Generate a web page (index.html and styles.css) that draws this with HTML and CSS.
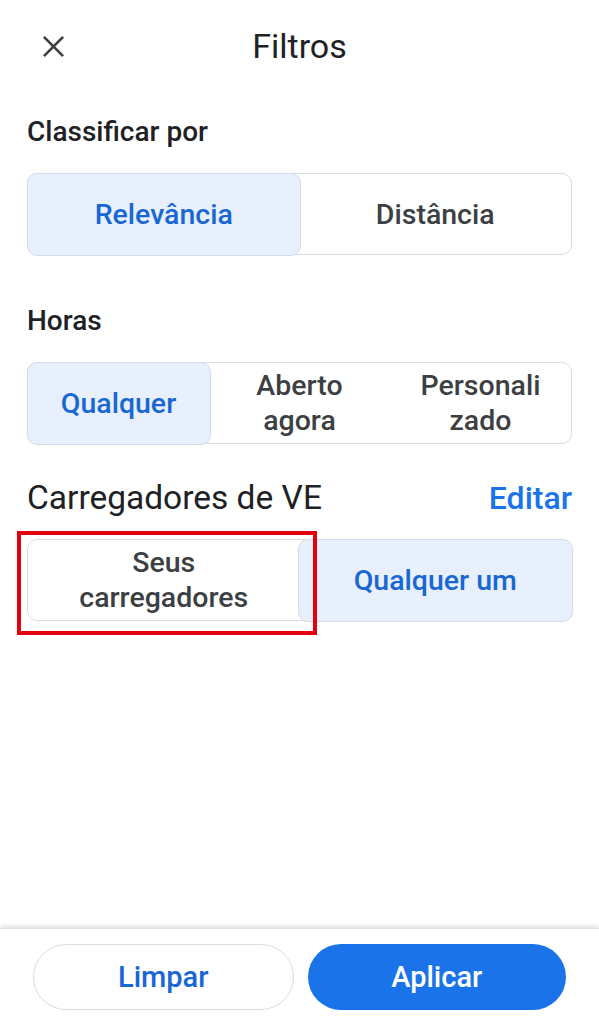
FILE: index.html
```html
<!DOCTYPE html>
<html lang="pt">
<head>
    <meta charset="UTF-8">
    <meta name="viewport" content="width=device-width, initial-scale=1.0">
    <title>Filtros</title>
    <link rel="stylesheet" href="styles.css">
</head>
<body>
    <div class="page">
        <header class="top">
            <button class="close" aria-label="Fechar">
                <svg width="24" height="24" viewBox="0 0 24 24"><path d="M2 2 L22 22 M22 2 L2 22" stroke="#3c4043" stroke-width="2.8" fill="none"/></svg>
            </button>
            <h1 class="title">Filtros</h1>
            <span></span>
        </header>

        <main class="content">
            <h2 class="label">Classificar por</h2>
            <div class="seg">
                <div class="opt on">Relevância</div>
                <div class="opt">Distância</div>
            </div>

            <h2 class="label label-hours">Horas</h2>
            <div class="seg three">
                <div class="opt on">Qualquer</div>
                <div class="opt">Aberto<br>agora</div>
                <div class="opt">Personali<br>zado</div>
            </div>

            <div class="row-head">
                <h2 class="label big">Carregadores de VE</h2>
                <a class="edit" href="#">Editar</a>
            </div>
            <div class="seg-wrap">
                <div class="seg">
                    <div class="opt">Seus<br>carregadores</div>
                    <div class="opt on">Qualquer um</div>
                </div>
                <div class="mark"></div>
            </div>
        </main>

        <footer class="bottom">
            <button class="btn ghost">Limpar</button>
            <button class="btn primary">Aplicar</button>
        </footer>
    </div>
</body>
</html>
```

FILE: styles.css
```css
* { box-sizing: border-box; }
body {
    margin: 0;
    font-family: Roboto, "Noto Sans", Arial, sans-serif;
    background: #fff;
    color: #202124;
}
.page {
    height: 100vh;
    display: flex;
    flex-direction: column;
}
.top {
    display: grid;
    grid-template-columns: 1fr auto 1fr;
    align-items: center;
    height: 92px;
    padding: 0 27px;
}
.close {
    width: 52px;
    height: 52px;
    padding: 0;
    border: 0;
    background: none;
    display: flex;
    align-items: center;
    justify-content: center;
    justify-self: start;
}
.close svg { width: 23px; height: 23px; }
.title {
    margin: 0;
    font-size: 34px;
    font-weight: 400;
    color: #202124;
}
.content {
    flex: 1;
    padding: 0 27px;
}
.label {
    margin: 24px 0 0;
    height: 32px;
    line-height: 32px;
    font-size: 28px;
    font-weight: 500;
    color: #202124;
}
.label-hours { margin-top: 50px; }
.seg {
    margin-top: 25px;
    height: 82px;
    display: grid;
    grid-template-columns: 1fr 1fr;
    border: 1.5px solid #dadce0;
    border-radius: 10px;
}
.seg.three { grid-template-columns: 1fr 1fr 1fr; }
.opt {
    display: flex;
    align-items: center;
    justify-content: center;
    text-align: center;
    margin: -1.5px;
    font-size: 28.5px;
    font-weight: 500;
    line-height: 35px;
    color: #3c4043;
}
.opt.on {
    background: #e8f0fe;
    border: 1.5px solid #d3dcea;
    border-radius: 10px;
    color: #1967d2;
}
.row-head {
    margin-top: 35px;
    height: 38px;
    display: flex;
    justify-content: space-between;
    align-items: center;
}
.label.big {
    margin: 0;
    font-size: 33.5px;
    font-weight: 400;
    height: 38px;
    line-height: 38px;
}
.edit {
    font-size: 32px;
    line-height: 38px;
    font-weight: 500;
    color: #1a73e8;
    text-decoration: none;
}
.seg-wrap {
    position: relative;
    margin-top: 22px;
}
.seg-wrap .seg { margin-top: 0; }
.mark {
    position: absolute;
    left: -10px;
    top: -8px;
    width: 300px;
    height: 104px;
    border: 4px solid #e5000f;
}
.bottom {
    display: flex;
    gap: 14px;
    padding: 15px 33px 14px;
    border-top: 1px solid #e2e2e2;
    box-shadow: 0 -2px 4px rgba(0, 0, 0, 0.12);
}
.btn {
    flex: 1;
    height: 66px;
    border-radius: 33px;
    font-family: inherit;
    font-size: 29px;
    font-weight: 500;
}
.ghost {
    background: #fff;
    border: 1.5px solid #dadce0;
    color: #1967d2;
}
.primary {
    background: #1a73e8;
    border: 0;
    color: #fff;
}
```
